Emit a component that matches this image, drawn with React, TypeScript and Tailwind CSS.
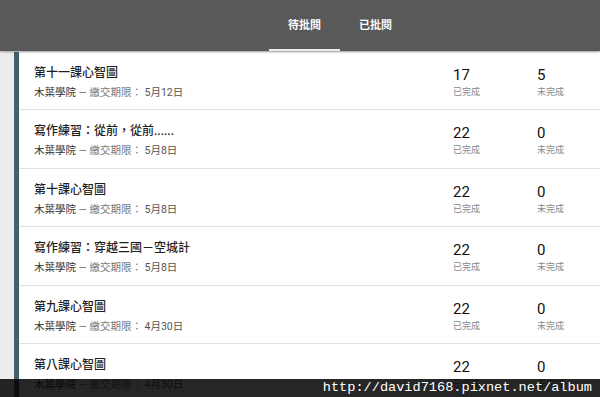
const assignments = [
  { title: "第十一課心智圖", due: "5月12日", done: 17, todo: 5 },
  { title: "寫作練習：從前，從前......", due: "5月8日", done: 22, todo: 0 },
  { title: "第十課心智圖", due: "5月8日", done: 22, todo: 0 },
  { title: "寫作練習：穿越三國－空城計", due: "5月8日", done: 22, todo: 0 },
  { title: "第九課心智圖", due: "4月30日", done: 22, todo: 0 },
  { title: "第八課心智圖", due: "4月30日", done: 22, todo: 0 },
];

const font = "font-['Roboto','Noto_Sans_CJK_TC',sans-serif]";

export default function App() {
  return (
    <div className={`relative h-[397px] w-[600px] overflow-hidden bg-[#ececec] ${font}`}>
      <header className="relative z-10 flex h-[51px] bg-[#595959] pl-[269px] shadow-[0_1px_2px_rgba(0,0,0,0.35)]">
        <div className="flex w-[71px] items-center justify-center border-b-2 border-[#ececec] pt-[3px] text-[11px] font-bold text-white">
          待批閱
        </div>
        <div className="flex w-[71px] items-center justify-center border-b-2 border-transparent pt-[3px] text-[11px] font-bold text-white">
          已批閱
        </div>
      </header>

      <div className="ml-[14px] mt-px border-l-[5px] border-[#45606b] bg-white">
        {assignments.map((a) => (
          <div
            key={a.title}
            className="flex h-[58.4px] border-b border-[#e2e2e2] pl-[15px]"
          >
            <div className="flex-1 pt-[13px]">
              <div className="text-[12px] leading-4 font-medium text-[#1f1f1f]">
                {a.title}
              </div>
              <div className="mt-[5px] text-[10.5px] leading-[14px] text-[#777]">
                <span className="text-[#333]">木葉學院</span> — 繳交期限：{" "}
                <span className="text-[#555]">{a.due}</span>
              </div>
            </div>
            <div className="flex w-[147px] pt-[14px]">
              <div className="w-[84px]">
                <div className="text-[15px] leading-[18px] text-[#111]">{a.done}</div>
                <div className="mt-[2px] text-[9px] leading-3 text-[#888]">已完成</div>
              </div>
              <div>
                <div className="text-[15px] leading-[18px] text-[#111]">{a.todo}</div>
                <div className="mt-[2px] text-[9px] leading-3 text-[#888]">未完成</div>
              </div>
            </div>
          </div>
        ))}
      </div>

      <div className="absolute bottom-0 left-0 z-20 flex h-[18px] w-full items-center justify-end bg-black/85 pr-[8px] font-['Liberation_Mono',monospace] text-[13.6px] text-white">
        http://david7168.pixnet.net/album
      </div>
    </div>
  );
}
